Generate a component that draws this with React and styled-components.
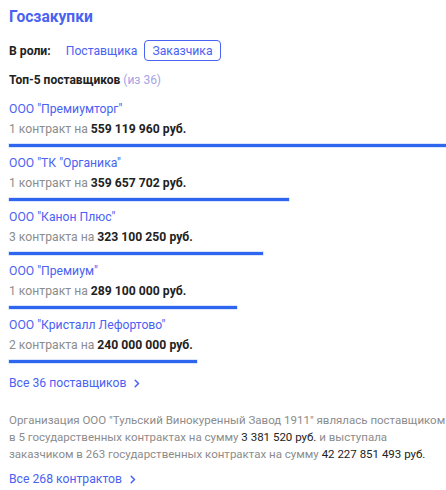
import React from "react";
import styled, { createGlobalStyle } from "styled-components";

const Global = createGlobalStyle`
  html, body { margin: 0; padding: 0; background: #fff; }
  body { font-family: Roboto, "Noto Sans", "Liberation Sans", sans-serif; color: #222; }
`;

const Page = styled.div`
  padding: 6px 0 0 9px;
  width: 437px;
  box-sizing: content-box;
`;

const Title = styled.h2`
  margin: 0;
  font-size: 15.6px;
  line-height: 22px;
  font-weight: 700;
  color: #4a62f2;
`;

const RoleRow = styled.div`
  display: flex;
  align-items: center;
  margin-top: 12px;
  height: 21px;
`;

const RoleLabel = styled.span`
  font-size: 12.2px;
  font-weight: 700;
  color: #222;
  margin-right: 9px;
`;

const RoleButton = styled.span`
  font-size: 12.2px;
  color: #4a62f2;
  height: 21px;
  display: inline-flex;
  align-items: center;
  box-sizing: border-box;
  padding: 0 ${(p) => (p.$active ? "7px" : "5px")};
  border: 1px solid ${(p) => (p.$active ? "#4a62f2" : "transparent")};
  border-radius: 4px;
  margin-right: 1px;
`;

const Heading = styled.div`
  margin-top: 9px;
  font-size: 12px;
  line-height: 20px;
  font-weight: 700;
  color: #222;
`;

const Muted = styled.span`
  font-weight: 400;
  color: #a3a4e6;
`;

const List = styled.div`
  margin-top: 9px;
  display: flex;
  flex-direction: column;
`;

const Row = styled.div`
  display: flex;
  flex-direction: column;
  padding-bottom: 6px;
`;

const Name = styled.div`
  font-size: 12.2px;
  line-height: 20px;
  color: #4a62f2;
`;

const Amount = styled.div`
  font-size: 12.2px;
  line-height: 20px;
  color: #8c8c8c;
`;

const Strong = styled.b`
  font-weight: 700;
  color: #222;
`;

const Bar = styled.div`
  margin-top: 5px;
  height: 3px;
  background: #2e66f0;
  box-shadow: 0 0 0 0.5px rgba(46, 102, 240, 0.35);
`;

const MoreLink = styled.a`
  display: inline-flex;
  align-items: center;
  gap: 8px;
  font-size: 12.2px;
  line-height: 20px;
  color: #4a62f2;
  text-decoration: none;
  margin-top: ${(p) => p.$top}px;
`;

const Summary = styled.p`
  margin: 19px 0 0;
  font-size: 11.5px;
  line-height: 17px;
  color: #8c8c8c;
`;

const Dark = styled.span`
  color: #222;
`;

const Chevron = () => (
  <svg width="6" height="9" viewBox="0 0 6 9" fill="none">
    <path d="M1.2 1.2L4.5 4.5L1.2 7.8" stroke="#4a62f2" strokeWidth="1.5" strokeLinecap="round" strokeLinejoin="round" />
  </svg>
);

const suppliers = [
  { name: 'ООО "Премиумторг"', count: "1 контракт", sum: "559 119 960 руб.", w: 437 },
  { name: 'ООО "ТК "Органика"', count: "1 контракт", sum: "359 657 702 руб.", w: 280 },
  { name: 'ООО "Канон Плюс"', count: "3 контракта", sum: "323 100 250 руб.", w: 254 },
  { name: 'ООО "Премиум"', count: "1 контракт", sum: "289 100 000 руб.", w: 228 },
  { name: 'ООО "Кристалл Лефортово"', count: "2 контракта", sum: "240 000 000 руб.", w: 188 },
];

export default function App() {
  return (
    <>
      <Global />
      <Page>
        <Title>Госзакупки</Title>
        <RoleRow>
          <RoleLabel>В роли:</RoleLabel>
          <RoleButton>Поставщика</RoleButton>
          <RoleButton $active>Заказчика</RoleButton>
        </RoleRow>
        <Heading>
          Топ-5 поставщиков <Muted>(из 36)</Muted>
        </Heading>
        <List>
          {suppliers.map((s) => (
            <Row key={s.name}>
              <Name>{s.name}</Name>
              <Amount>
                {s.count} на <Strong>{s.sum}</Strong>
              </Amount>
              <Bar style={{ width: s.w }} />
            </Row>
          ))}
        </List>
        <MoreLink href="#" $top={4}>
          Все 36 поставщиков <Chevron />
        </MoreLink>
        <Summary>
          Организация ООО "Тульский Винокуренный Завод 1911" являлась поставщиком
          <br />в 5 государственных контрактах на сумму <Dark>3 381 520 руб.</Dark> и выступала
          <br />
          заказчиком в 263 государственных контрактах на сумму <Dark>42 227 851 493 руб.</Dark>
        </Summary>
        <MoreLink href="#" $top={6}>
          Все 268 контрактов <Chevron />
        </MoreLink>
      </Page>
    </>
  );
}
